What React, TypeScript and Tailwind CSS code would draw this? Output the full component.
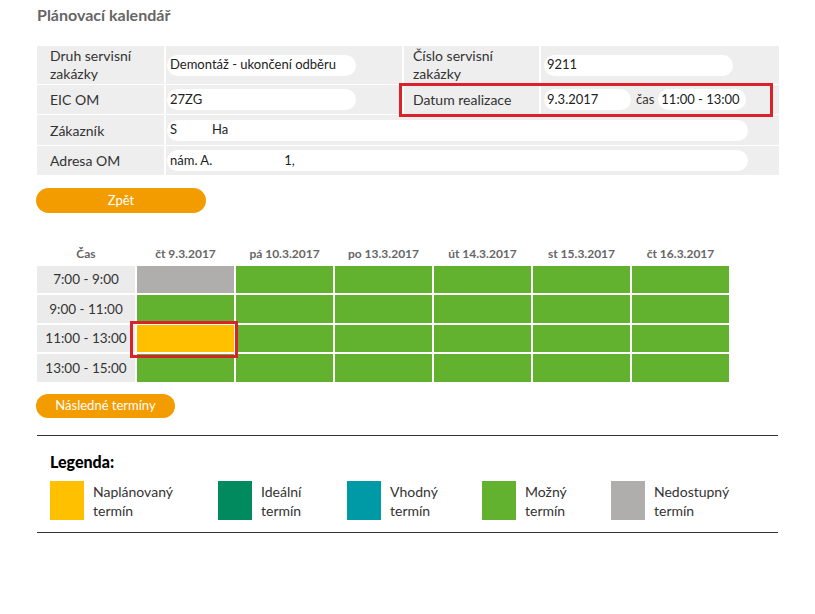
import React from "react";

const font = { fontFamily: "Lato, 'Open Sans', sans-serif" };

type Slot = "green" | "yellow" | "gray";

const days = ["čt 9.3.2017", "pá 10.3.2017", "po 13.3.2017", "út 14.3.2017", "st 15.3.2017", "čt 16.3.2017"];

const slots: { time: string; cells: Slot[]; h: string }[] = [
  { time: "7:00 - 9:00", cells: ["gray", "green", "green", "green", "green", "green"], h: "h-[27px]" },
  { time: "9:00 - 11:00", cells: ["green", "green", "green", "green", "green", "green"], h: "h-[28px]" },
  { time: "11:00 - 13:00", cells: ["yellow", "green", "green", "green", "green", "green"], h: "h-[27px]" },
  { time: "13:00 - 15:00", cells: ["green", "green", "green", "green", "green", "green"], h: "h-[28px]" },
];

const slotColor: Record<Slot, string> = {
  green: "bg-[#62b22f]",
  yellow: "bg-[#ffc000]",
  gray: "bg-[#b0aeac]",
};

const legend = [
  { color: "bg-[#ffc000]", label: "Naplánovaný", w: "w-[168px]" },
  { color: "bg-[#008a5e]", label: "Ideální", w: "w-[129px]" },
  { color: "bg-[#009aa6]", label: "Vhodný", w: "w-[135px]" },
  { color: "bg-[#62b22f]", label: "Možný", w: "w-[129px]" },
  { color: "bg-[#b0aeac]", label: "Nedostupný", w: "w-[120px]" },
];

function Pill({ className, children }: { className: string; children?: React.ReactNode }) {
  return (
    <div className={"flex h-[21px] items-center rounded-full bg-white pl-[3px] text-[13px] text-[#222] whitespace-pre " + className}>
      {children}
    </div>
  );
}

export default function App() {
  return (
    <div className="min-h-[614px] w-[815px] bg-white" style={font}>
      <div className="ml-[37px] w-[741px]">
        {/* Title */}
        <div className="pt-[5px] text-[16px] font-bold leading-[20px] text-[#666]">Plánovací kalendář</div>

        {/* Order info */}
        <div className="relative mt-[21px] grid grid-cols-[127px_236px_135px_238px] grid-rows-[38px_29px_30px_29px] gap-x-[2px] gap-y-px bg-white text-[14px] text-[#333]">
          <div className="flex items-center bg-[#eeeeee] pl-[13px] leading-[18px]">
            Druh servisní
            <br />
            zakázky
          </div>
          <div className="flex items-center bg-[#eeeeee] pl-[1px]">
            <Pill className="w-[189px]">Demontáž - ukončení odběru</Pill>
          </div>
          <div className="flex items-center bg-[#eeeeee] pl-[9px] leading-[18px]">
            Číslo servisní
            <br />
            zakázky
          </div>
          <div className="flex items-center bg-[#eeeeee] pl-[3px]">
            <Pill className="w-[189px]">9211</Pill>
          </div>

          <div className="flex items-center bg-[#eeeeee] pl-[13px]">EIC OM</div>
          <div className="flex items-center bg-[#eeeeee] pl-[1px]">
            <Pill className="w-[189px]">27ZG</Pill>
          </div>
          <div className="flex items-center bg-[#eeeeee] pl-[9px]">Datum realizace</div>
          <div className="flex items-center bg-[#eeeeee] pl-[3px] text-[13px]">
            <Pill className="w-[87px]">9.3.2017</Pill>
            <span className="ml-[5px] mr-[4px]">čas</span>
            <Pill className="w-[88px]">11:00 - 13:00</Pill>
          </div>

          <div className="flex items-center bg-[#eeeeee] pl-[13px]">Zákazník</div>
          <div className="col-span-3 flex items-center bg-[#eeeeee] pl-[1px]">
            <Pill className="w-[581px]">
              <span>S</span>
              <span className="ml-[35px]">Ha</span>
            </Pill>
          </div>

          <div className="flex items-center bg-[#eeeeee] pl-[13px]">Adresa OM</div>
          <div className="col-span-3 flex items-center bg-[#eeeeee] pl-[1px]">
            <Pill className="w-[581px]">
              <span>nám. A.</span>
              <span className="ml-[72px]">1,</span>
            </Pill>
          </div>

          <div className="pointer-events-none absolute left-[362px] top-[37px] h-[34px] w-[374px] border-[3px] border-[#d9222a]" />
        </div>

        {/* Back */}
        <button className="mt-[13px] -ml-px flex h-[25px] w-[170px] items-center justify-center rounded-full bg-[#f39c00] text-[13px] text-white">
          Zpět
        </button>

        {/* Calendar */}
        <div className="mt-[31px] grid grid-cols-[98px_repeat(6,97px)] gap-x-[2px] text-[12px] font-bold leading-[20px] text-[#666]">
          <div className="text-center">Čas</div>
          {days.map((d) => (
            <div key={d} className="text-center">
              {d}
            </div>
          ))}
        </div>
        <div className="relative mt-[2px] flex flex-col gap-y-[2px]">
          {slots.map((s) => (
            <div key={s.time} className={"grid grid-cols-[98px_repeat(6,97px)] gap-x-[2px] " + s.h}>
              <div className="flex items-center justify-center bg-[#ebebeb] text-[13.5px] text-[#333]">{s.time}</div>
              {s.cells.map((c, i) => (
                <div key={i} className={slotColor[c]} />
              ))}
            </div>
          ))}
          <div className="pointer-events-none absolute left-[93px] top-[55px] h-[37px] w-[108px] border-[3px] border-[#d9222a]" />
        </div>

        <button className="mt-[12px] -ml-px flex h-[24px] w-[139px] items-center justify-center rounded-full bg-[#f39c00] text-[13px] text-white">
          Následné termíny
        </button>

        {/* Legend */}
        <div className="mt-[17px] border-y border-[#333] pb-[12px] pl-[13px] pt-[16px]">
          <div className="text-[16px] font-black leading-[20px] text-black">Legenda:</div>
          <div className="mt-[9px] flex">
            {legend.map((l) => (
              <div key={l.label} className={"flex " + l.w}>
                <div className={"h-[39px] w-[34px] shrink-0 " + l.color} />
                <div className="ml-[9px] pt-[1px] text-[14px] leading-[19px] text-[#333]">
                  {l.label}
                  <br />
                  termín
                </div>
              </div>
            ))}
          </div>
        </div>
      </div>
    </div>
  );
}
